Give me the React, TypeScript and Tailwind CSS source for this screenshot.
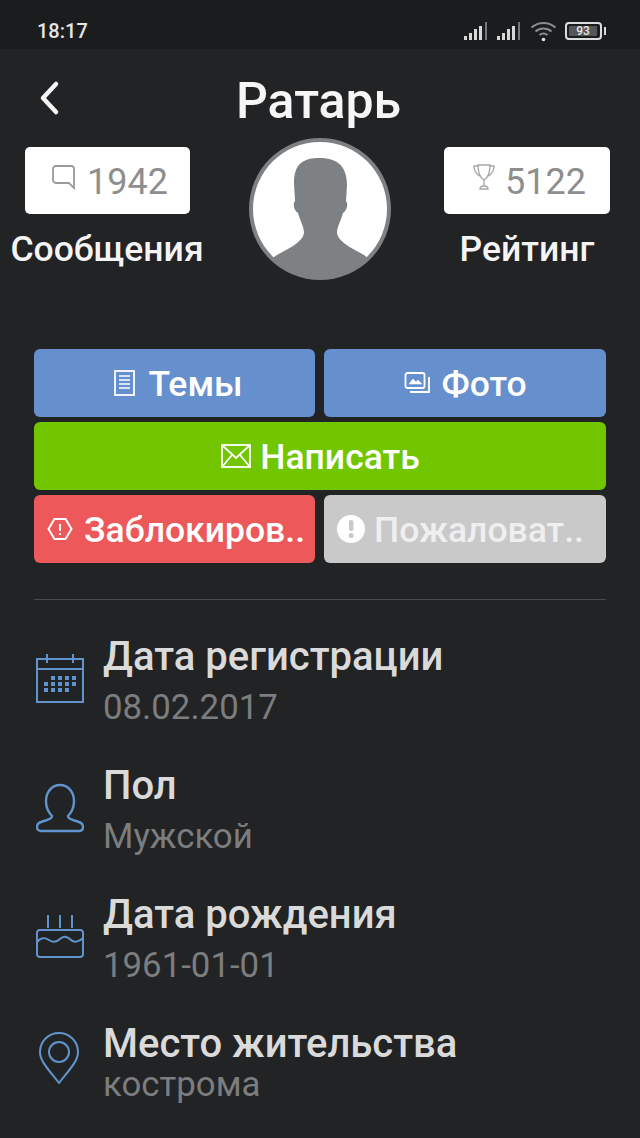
import { ReactNode } from 'react';

const font = { fontFamily: 'Roboto, sans-serif' };

function Bars() {
  return (
    <svg width="25" height="18" viewBox="0 0 25 18" className="text-[#d8d8d8]">
      <rect x="0" y="14" width="3" height="4" fill="currentColor" />
      <rect x="5" y="11" width="3" height="7" fill="currentColor" />
      <rect x="10" y="7" width="3" height="11" fill="currentColor" />
      <rect x="15" y="4" width="3" height="14" fill="currentColor" />
      <rect x="21" y="0" width="2" height="18" fill="#77787a" />
    </svg>
  );
}

function StatBox({ icon, value, label, boxWidth }: { icon: ReactNode; value: string; label: string; boxWidth: string }) {
  return (
    <div className="w-[214px] flex flex-col items-center">
      <div className={`${boxWidth} h-[67px] bg-white rounded-[5px] flex items-center justify-center gap-[10px] text-[36px] text-[#8e8e8e] pl-[5px]`}>
        <span className="mb-[8px]">{icon}</span>
        <span className="pt-[3px]">{value}</span>
      </div>
      <div className="mt-[15px] text-[35.5px] leading-[40px] font-medium text-[#f4f4f4] whitespace-nowrap">{label}</div>
    </div>
  );
}

function ActionButton({ color, icon, label, wide, text = 'text-white', spacing = 'gap-[8px]' }: { color: string; icon: ReactNode; label: string; wide?: boolean; text?: string; spacing?: string }) {
  return (
    <div className={`${color} ${wide ? 'col-span-2' : ''} ${text} ${spacing} h-[68px] rounded-[6px] flex items-center justify-center text-[35.5px] font-medium whitespace-nowrap`}>
      {icon}
      <span className="pt-[4px]">{label}</span>
    </div>
  );
}

function InfoRow({ icon, title, value, tight }: { icon: ReactNode; title: string; value: string; tight?: boolean }) {
  return (
    <div className="flex items-start h-[129px]">
      <div className={`${tight ? 'h-[84px]' : 'h-[100px]'} w-[69px] flex items-center justify-start pl-[2px] pb-[7px]`}>{icon}</div>
      <div>
        <div className="text-[40px] leading-[50px] font-medium text-[#dadada] whitespace-nowrap">{title}</div>
        <div className={`${tight ? 'leading-[30px]' : 'leading-[50px]'} text-[34.8px] text-[#7b7d7f] whitespace-nowrap`}>{value}</div>
      </div>
    </div>
  );
}

export default function App() {
  return (
    <div style={font} className="w-[640px] h-[1138px] bg-[#222325] overflow-hidden">
      {/* status bar */}
      <div className="h-[49px] bg-[#1b1c1e] flex items-center justify-between pl-[37px] pr-[38px] pt-[20px] pb-[8px]">
        <span className="text-[20px] font-medium text-[#e6e6e6]">18:17</span>
        <div className="flex items-center gap-[8px]">
          <Bars />
          <Bars />
          <svg width="27" height="22" viewBox="0 0 27 22" fill="none" stroke="#8a8b8c" strokeWidth="2.2">
            <path d="M1.5 7.5c7-6 17-6 24 0" />
            <path d="M5.5 11.5c4.500-4 11.500-4 16 0" />
            <path d="M9.500 15c2.300-2 5.700-2 8 0" />
            <circle cx="13.500" cy="19.500" r="1.800" fill="#e0e0e0" stroke="none" />
          </svg>
          <div className="relative w-[37px] h-[18px] border-[2px] border-[#dcdcdc] rounded-[4px] flex items-center p-[2px]">
            <div className="w-[28px] h-full bg-[#55565a] rounded-[1px] flex items-center justify-center text-[12px] font-medium text-[#e6e6e6]">93</div>
            <div className="absolute right-[-6px] top-[3px] w-[2px] h-[8px] bg-[#dcdcdc]" />
          </div>
        </div>
      </div>

      {/* header */}
      <div className="relative h-[89px] flex items-center justify-center">
        <svg width="24" height="36" viewBox="0 0 24 36" fill="none" stroke="#f4f4f4" strokeWidth="4.500" strokeLinecap="round" strokeLinejoin="round" className="absolute left-[38px] top-[31px]">
          <path d="M18 4 5 18l13 14" />
        </svg>
        <h1 className="text-[50px] leading-[56px] font-medium text-[#f6f6f6] ml-[-3px] mt-[15px]">Ратарь</h1>
      </div>

      {/* stats */}
      <div className="flex justify-between pl-0 pr-[6px] mt-[9px] h-[203px]">
        <StatBox
          label="Сообщения"
          value="1942"
          boxWidth="w-[165px]"
          icon={
            <svg width="26" height="26" viewBox="0 0 26 26" fill="none" stroke="#9a9a9a" strokeWidth="1.800">
              <path d="M5 2h15a3 3 0 0 1 3 3v19l-5-5H5a3 3 0 0 1-3-3V5a3 3 0 0 1 3-3z" />
            </svg>
          }
        />
        <div className="w-[142px] h-[142px] rounded-full bg-[#7d8184] p-[4px] mt-[-9px] ml-[6px] shrink-0">
          <div className="w-full h-full rounded-full bg-white">
            <svg viewBox="0 0 134 134" className="w-full h-full overflow-visible">
              <path d="M41 41C41 21 51 16 67 16C85 16 94 25 94 43L93 59C96 63 93 69 90 71C87 81 84 85 84 91C85 99 96 105 111 113L116 117A70 70 0 0 1 18 117L24 113C39 105 50 99 51 91C51 85 48 81 45 71C42 69 39 63 42 59z" fill="#7d8184" />
            </svg>
          </div>
        </div>
        <StatBox
          label="Рейтинг"
          value="5122"
          boxWidth="w-[166px]"
          icon={
            <svg width="22" height="28" viewBox="0 0 22 28" fill="none" stroke="#a8a8a8" strokeWidth="1.400">
              <path d="M5 2h12c0 7-1 12-6 15C6 14 5 9 5 2z" />
              <path d="M5 3H1c0 5 2 8 6 10M17 3h4c0 5-2 8-6 10" />
              <path d="M11 17v6M7 26c0-2 2-3 4-3s4 1 4 3z" />
            </svg>
          }
        />
      </div>

      {/* actions */}
      <div className="px-[34px] mt-[-1px] grid grid-cols-[281px_282px] gap-x-[9px] gap-y-[5px]">
        <ActionButton
          color="bg-[#6690cd]"
          label="Темы"
          spacing="gap-[11px] pl-[7px]"
          icon={
            <svg width="24" height="28" viewBox="0 0 24 28" fill="none" stroke="white" strokeWidth="1.800">
              <rect x="2" y="2" width="19" height="24" />
              <path d="M6 7h11M6 11h11M6 15h11M6 19h11" strokeWidth="1.500" />
            </svg>
          }
        />
        <ActionButton
          color="bg-[#6690cd]"
          label="Фото"
          spacing="gap-[10px] pl-[1px]"
          icon={
            <svg width="27" height="26" viewBox="0 0 27 26" fill="none" stroke="white" strokeWidth="1.800">
              <rect x="1.500" y="3" width="19" height="15" rx="2" />
              <path d="M5 14l4-5 3 3 2-2 4 4z" fill="white" strokeWidth="0.500" />
              <path d="M25 7v15H6" />
            </svg>
          }
        />
        <ActionButton
          wide
          color="bg-[#72c600]"
          label="Написать"
          icon={
            <svg width="32" height="26" viewBox="0 0 32 26" fill="none" stroke="white" strokeWidth="1.800">
              <rect x="2" y="2" width="28" height="22" />
              <path d="M2 2l14 13L30 2M2 24l10-12M30 24L20 12" />
            </svg>
          }
        />
        <ActionButton
          color="bg-[#ed595b]"
          label="Заблокиров.."
          spacing="gap-[11px] pl-[3px]"
          icon={
            <svg width="26" height="24" viewBox="0 0 26 24" fill="none" stroke="white" strokeWidth="2" className="shrink-0">
              <path d="M7.500 2h11l6 10-6 10h-11l-6-10z" />
              <path d="M13 7v7M13 16v2" />
            </svg>
          }
        />
        <ActionButton
          color="bg-[#c9c9c9]"
          label="Пожаловат.."
          text="text-[#efefef]"
          spacing="gap-[9px] pr-[9px]"
          icon={
            <svg width="28" height="28" viewBox="0 0 28 28" className="shrink-0">
              <circle cx="14" cy="14" r="14" fill="white" />
              <rect x="12" y="5" width="4.500" height="11" rx="2" fill="#c9c9c9" />
              <circle cx="14.200" cy="20.500" r="2.500" fill="#c9c9c9" />
            </svg>
          }
        />
      </div>

      <div className="mx-[34px] mt-[36px] h-[1px] bg-[#4a4b4d]" />

      {/* profile info */}
      <div className="px-[34px] mt-[18px] pt-[14px]">
        <InfoRow
          title="Дата регистрации"
          value="08.02.2017"
          icon={
            <svg width="48" height="50" viewBox="0 0 48 50" fill="none" stroke="#6194cc" strokeWidth="2">
              <rect x="1" y="5" width="46" height="43" />
              <path d="M1 15h46M11 0v9M37 0v9" />
              <g fill="#6194cc" stroke="none">
                <rect x="8" y="28" width="4" height="4" /><rect x="15" y="28" width="4" height="4" /><rect x="22" y="28" width="4" height="4" /><rect x="29" y="28" width="4" height="4" /><rect x="36" y="28" width="4" height="4" />
                <rect x="15" y="22" width="4" height="4" /><rect x="22" y="22" width="4" height="4" /><rect x="29" y="22" width="4" height="4" /><rect x="36" y="22" width="4" height="4" />
                <rect x="8" y="34" width="4" height="4" /><rect x="15" y="34" width="4" height="4" /><rect x="22" y="34" width="4" height="4" /><rect x="29" y="34" width="4" height="4" />
              </g>
            </svg>
          }
        />
        <InfoRow
          title="Пол"
          value="Мужской"
          icon={
            <svg width="48" height="50" viewBox="0 0 48 50" fill="none" stroke="#6194cc" strokeWidth="2.400">
              <path d="M24 2c8 0 14 7 14 16 0 7-3 12-6 15 0 2 2 3 5 4l6 2c3 1 4 3 4 5 0 3-2 4-4 4H5c-2 0-4-1-4-4 0-2 1-4 4-5l6-2c3-1 5-2 5-4-3-3-6-8-6-15C10 9 16 2 24 2z" />
            </svg>
          }
        />
        <InfoRow
          title="Дата рождения"
          value="1961-01-01"
          icon={
            <svg width="48" height="44" viewBox="0 0 48 44" fill="none" stroke="#6194cc" strokeWidth="2">
              <path d="M12 0v13M24 0v13M36 0v13" />
              <rect x="1" y="15" width="46" height="27" rx="3" />
              <path d="M1 27c5-6 9-4 12-2s7 3 11-1 8-2 11 1 8 2 12-2" />
            </svg>
          }
        />
        <InfoRow
          tight
          title="Место жительства"
          value="кострома"
          icon={
            <svg width="42" height="54" viewBox="0 0 42 54" fill="none" stroke="#6194cc" strokeWidth="2" className="ml-[2px]">
              <path d="M21 52C10 38 2 30 2 21a19 19 0 0 1 38 0c0 9-8 17-19 31z" />
              <circle cx="21" cy="21" r="10" />
            </svg>
          }
        />
      </div>
    </div>
  );
}
